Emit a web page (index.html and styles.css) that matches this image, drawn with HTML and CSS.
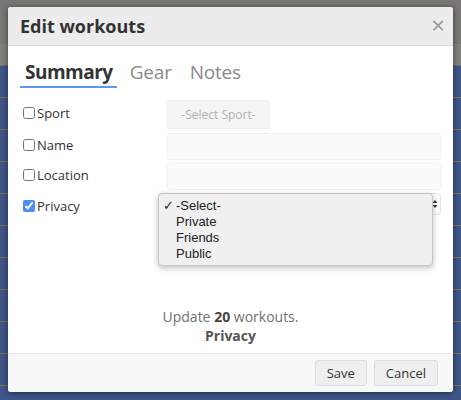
FILE: index.html
```html
<!DOCTYPE html>
<html lang="en-US">
  <head>
    <meta charset="UTF-8" />
    <title>Edit workouts</title>
    <link rel="stylesheet" href="styles.css">
  </head>
  <body>
    <div class="page">
      <div class="topbar"></div>
      <div class="subbar"></div>
      <div class="table">
        <div class="trow"></div>
        <div class="trow"></div>
        <div class="trow"></div>
        <div class="trow"></div>
        <div class="trow"></div>
        <div class="trow"></div>
        <div class="trow"></div>
        <div class="trow"></div>
        <div class="trow"></div>
        <div class="trow"></div>
      </div>
    </div>

    <div class="modal">
      <div class="modal-header">
        <h3>Edit workouts</h3>
        <span class="close">&times;</span>
      </div>
      <div class="modal-body">
        <div class="tabs">
          <span class="tab active">Summary</span>
          <span class="tab">Gear</span>
          <span class="tab">Notes</span>
        </div>

        <div class="rows">
          <div class="row row-sport">
            <label class="check"><input type="checkbox" /> Sport</label>
            <div class="field"><button class="sport-btn">-Select Sport-</button></div>
          </div>
          <div class="row row-input">
            <label class="check"><input type="checkbox" /> Name</label>
            <div class="field"><div class="text-input"></div></div>
          </div>
          <div class="row row-input">
            <label class="check"><input type="checkbox" /> Location</label>
            <div class="field"><div class="text-input"></div></div>
          </div>
          <div class="row row-privacy">
            <label class="check"><input type="checkbox" checked /> Privacy</label>
            <div class="field">
              <div class="select">
                <span class="arrows">
                  <svg width="6" height="10" viewBox="0 0 6 10"><path d="M0.5 4 L3 1 L5.5 4 Z M0.5 6 L3 9 L5.5 6 Z" fill="#333"/></svg>
                </span>
              </div>
            </div>
          </div>
        </div>

        <div class="summary">
          <div>Update <b>20</b> workouts.</div>
          <div class="what">Privacy</div>
        </div>
      </div>
      <div class="modal-footer">
        <button class="btn">Save</button>
        <button class="btn">Cancel</button>
      </div>
    </div>

    <ul class="popup">
      <li class="selected"><span class="tick">&#10003;</span>-Select-</li>
      <li>Private</li>
      <li>Friends</li>
      <li>Public</li>
    </ul>
  </body>
</html>
```

FILE: styles.css
```css
body {
  margin: 0;
  width: 461px;
  height: 400px;
  overflow: hidden;
  font-family: "Open Sans", sans-serif;
  background-color: #3f5688;
}

.page {
  display: flex;
  flex-direction: column;
}

.topbar {
  height: 44px;
  background: #797875;
}

.subbar {
  height: 21px;
  background: #83827e;
  border-bottom: 1px solid #6c6b68;
}

.trow {
  height: 31px;
  border-bottom: 1px solid #7d7658;
  background: #3f5688;
}

.modal {
  position: absolute;
  left: 8px;
  top: 7px;
  width: 445px;
  height: 385px;
  display: flex;
  flex-direction: column;
  background: #fff;
  border-radius: 3px;
  box-shadow: 0 1px 6px rgba(0, 0, 0, 0.5);
  overflow: hidden;
}

.modal-header {
  height: 38px;
  display: flex;
  align-items: center;
  justify-content: space-between;
  padding: 0 8px 0 12px;
  background: #ececec;
  border-bottom: 1px solid #dcdcdc;
}

.modal-header h3 {
  margin: 0;
  font-size: 18px;
  font-weight: 700;
  color: #333;
}

.close {
  font-size: 24px;
  line-height: 24px;
  color: #9a9a9a;
  margin-top: -2px;
}

.modal-body {
  flex: 1;
  display: flex;
  flex-direction: column;
  padding: 0 12px 0 15px;
}

.tabs {
  display: flex;
  gap: 8px;
  margin: 13px 0 0 -3px;
}

.tab {
  padding: 0 5px;
  font-size: 19px;
  letter-spacing: -0.2px;
  line-height: 27px;
  color: #8a8a8a;
  border-bottom: 2px solid transparent;
}

.tab.active {
  font-weight: 700;
  color: #333;
  border-bottom-color: #5b98f5;
  padding-right: 4px;
  letter-spacing: -0.5px;
}

.rows {
  margin-top: 12px;
  display: flex;
  flex-direction: column;
}

.row {
  display: flex;
  align-items: center;
}

.row-sport {
  height: 29px;
  margin-bottom: 4px;
}

.row-input {
  height: 27px;
  margin-bottom: 3px;
}

.row-privacy {
  height: 22px;
}

.check {
  width: 144px;
  display: flex;
  align-items: center;
  font-size: 13px;
  color: #333;
  margin-top: -4px;
}

.row-privacy .check {
  margin-top: 3px;
}

.check input {
  width: 12px;
  height: 12px;
  margin: 0 2px 0 0;
  accent-color: #4a8df6;
}

.field {
  flex: 1;
  height: 100%;
}

.sport-btn {
  height: 100%;
  width: 103px;
  padding: 0;
  font-family: "Open Sans", sans-serif;
  font-size: 12px;
  color: #b0b0b0;
  background: #f5f5f5;
  border: 1px solid #efefef;
  border-radius: 3px;
}

.text-input {
  height: 100%;
  box-sizing: border-box;
  background: #fbfbfb;
  border: 1px solid #f1f1f1;
  border-radius: 3px;
}

.select {
  height: 100%;
  box-sizing: border-box;
  display: flex;
  align-items: center;
  justify-content: flex-end;
  padding-right: 2px;
  border: 1px solid #e2e2e2;
  border-radius: 4px;
  background: #fff;
}

.arrows {
  display: flex;
}

.summary {
  margin-top: auto;
  padding-bottom: 8px;
  text-align: center;
  font-size: 14px;
  line-height: 19px;
  color: #707070;
  margin-left: -3px;
}

.summary b {
  color: #444;
}

.summary .what {
  font-weight: 700;
  color: #555;
}

.modal-footer {
  height: 38px;
  display: flex;
  align-items: center;
  justify-content: flex-end;
  gap: 7px;
  padding: 0 15px;
  background: #f8f8f8;
  border-top: 1px solid #e8e8e8;
}

.btn {
  height: 26px;
  padding: 0 11px;
  font-family: "Open Sans", sans-serif;
  font-size: 13px;
  color: #333;
  background: #efefef;
  border: 1px solid #dedede;
  border-radius: 3px;
}

.popup {
  position: absolute;
  left: 158px;
  top: 193px;
  width: 275px;
  height: 73px;
  box-sizing: border-box;
  margin: 0;
  padding: 4px 0 0 0;
  list-style: none;
  background: #f0f0f0;
  border: 1px solid #c6c6c6;
  border-radius: 4px;
  box-shadow: 0 2px 6px rgba(0, 0, 0, 0.25);
  font-family: "Liberation Sans", Arial, sans-serif;
  font-size: 13px;
  line-height: 16px;
  color: #222;
}

.popup li {
  padding-left: 17px;
  position: relative;
}

.tick {
  position: absolute;
  left: 4px;
  font-family: "DejaVu Sans", sans-serif;
  font-size: 13px;
}
```
